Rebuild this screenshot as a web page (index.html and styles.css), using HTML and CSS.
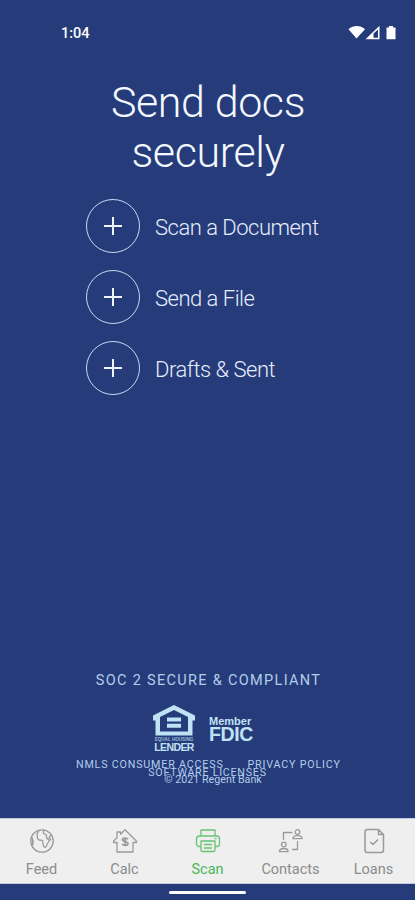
FILE: index.html
```html
<!DOCTYPE html>
<html lang="en">
<head>
<meta charset="utf-8">
<meta name="viewport" content="width=device-width, initial-scale=1">
<title>Send docs securely</title>
<link rel="stylesheet" href="styles.css">
</head>
<body>
<div class="screen">
  <header class="status">
    <span class="time">1:04</span>
    <svg class="status-icons" width="50" height="18" viewBox="0 0 50 18" fill="#fff">
      <path d="M.5 5.200C5.500 .8 12 .8 17 5.200L8.500 14.500Z"/>
      <path fill-rule="evenodd" d="M17.500 15.200L31.500 1.800V15.200ZM25.500 9.500V13.800H30V5.400Z"/>
      <path d="M41 2h4v1.500h2.500V15.200h-9V3.500H41Z"/>
    </svg>
  </header>
  <main class="content">
    <h1>Send docs<br>securely</h1>
    <ul class="actions">
      <li><span class="plus"><svg width="18" height="18" viewBox="0 0 18 18"><path d="M9 0v18M0 9h18"/></svg></span><span class="label">Scan a Document</span></li>
      <li><span class="plus"><svg width="18" height="18" viewBox="0 0 18 18"><path d="M9 0v18M0 9h18"/></svg></span><span class="label">Send a File</span></li>
      <li><span class="plus"><svg width="18" height="18" viewBox="0 0 18 18"><path d="M9 0v18M0 9h18"/></svg></span><span class="label">Drafts &amp; Sent</span></li>
    </ul>
  </main>
  <footer class="legal">
    <p class="soc">SOC 2 SECURE &amp; COMPLIANT</p>
    <div class="badges">
      <div class="lender">
        <svg width="42" height="31" viewBox="0 0 42 31"><path fill="#c0e2f5" fill-rule="evenodd" d="M21 0L42 10.500V15.500H39.500V30.500H2.500V15.500H0V10.500ZM21 5L7 12V26.500H35V12ZM14 12.500h14v4H14ZM14 18.700h14v4H14Z"/></svg>
        <span class="equal">EQUAL HOUSING</span>
        <span class="lender-name">LENDER</span>
      </div>
      <div class="fdic"><span class="member">Member</span><span class="fdic-name">FDIC</span></div>
    </div>
    <div class="links"><span>NMLS CONSUMER ACCESS</span><span>PRIVACY POLICY</span></div>
    <p class="licenses">SOFTWARE LICENSES</p>
    <p class="copyright">© 2021 Regent Bank</p>
  </footer>
  <nav class="tabs">
    <a class="tab">
      <svg viewBox="0 0 26 26"><circle cx="13" cy="13" r="11.200"/><path d="M10 2.500L8 6L8.500 10.500L10 12L13.500 12.300L14.500 18.500L16.500 19.500L18.500 15.500L20.500 12.500L18 10.500L17 6.500L14.500 5.500V2M22 7.500L20 9.500L22 12"/><path class="heavy" d="M2.500 9L4 13L3.500 17.500"/></svg>
      <span>Feed</span>
    </a>
    <a class="tab">
      <svg viewBox="0 0 26 26"><path d="M1.500 13.200L5 9.700V4H8.500V6.300L13 1.800L24.500 13.200V14.500H21V24H5V14.500H1.500Z"/><path class="heavy" d="M16 11.300C14.500 9.500 10.500 9.800 10.500 11.700C10.500 14 16 13 16 15.500C16 17.800 11.500 17.800 10 16M13.200 9.500V18.300"/></svg>
      <span>Calc</span>
    </a>
    <a class="tab active">
      <svg viewBox="0 0 26 26"><path d="M6 8V2H20V8M6 18.500H4Q1.500 18.500 1.500 16V11Q1.500 8 4.500 8H21.500Q24.500 8 24.500 11V16Q24.500 18.500 22 18.500H20M6 13H20V22Q20 23.500 18.500 23.500H7.500Q6 23.500 6 22ZM9 16.500H17M9 20H17M19.500 10.700H21.500"/></svg>
      <span>Scan</span>
    </a>
    <a class="tab">
      <svg viewBox="0 0 26 26"><path d="M5.500 12V4.500H14.500M19.500 13V21.500H14"/><circle cx="5.800" cy="16.500" r="2.300"/><path d="M1.500 23.700V22.500Q2.500 20.500 5.800 20.500T10 22.500V23.700Z"/><circle cx="19.500" cy="4" r="2.300"/><path d="M15 10.700V9.500Q16 7.700 19.500 7.700T24 9.500V10.700Z"/></svg>
      <span>Contacts</span>
    </a>
    <a class="tab">
      <svg class="doc" viewBox="0 0 26 26"><path d="M6.500 1.500H17.500L22.500 6.500V22Q22.500 24.500 20 24.500H6.500Q4 24.500 4 22V4Q4 1.500 6.500 1.500ZM17.500 1.500V6.500H22.500M9.200 14L12 16.500L17 11.500"/></svg>
      <span>Loans</span>
    </a>
  </nav>
  <div class="gesture"><span></span></div>
</div>
</body>
</html>
```
FILE: styles.css
```css
* { box-sizing: border-box; }
body, h1, p, ul { margin: 0; padding: 0; }
body { background: #253b7a; font-family: Roboto, sans-serif; }
.screen { width: 415px; height: 900px; display: flex; flex-direction: column; overflow: hidden; }
.status { height: 66px; display: flex; justify-content: space-between; align-items: center; padding: 0 17px 0 61px; color: #fff; }
.time { font-size: 14.5px; font-weight: 500; }
.status-icons { display: block; }
.content { flex: 1; padding-top: 11px; }
h1 { color: #f4f8ff; font-weight: 300; font-size: 43px; line-height: 50px; letter-spacing: -.4px; text-align: center; padding-left: 1px; }
.actions { list-style: none; margin-top: 22px; padding-left: 86px; display: flex; flex-direction: column; gap: 17px; }
.actions li { display: flex; align-items: center; gap: 15px; height: 54px; }
.plus { width: 54px; height: 54px; border: 1.2px solid #c9d9f3; border-radius: 50%; display: flex; align-items: center; justify-content: center; }
.plus path { stroke: #eef5ff; stroke-width: 2; fill: none; }
.label { color: #e6edfc; font-weight: 300; font-size: 22px; line-height: 26px; letter-spacing: -.5px; padding-top: 4px; white-space: nowrap; }
.legal { height: 147px; display: flex; flex-direction: column; color: #b4cdea; white-space: nowrap; }
.soc { text-align: center; font-size: 14.5px; letter-spacing: 1.32px; line-height: 20px; padding-left: 2px; }
.badges { display: flex; gap: 14px; margin: 14px 0 0 153px; height: 47px; color: #c0e2f5; font-family: "Liberation Sans", sans-serif; font-weight: 700; }
.lender { width: 42px; display: flex; flex-direction: column; align-items: center; }
.lender svg { display: block; }
.equal { font-size: 4.6px; line-height: 5px; margin-top: 1px; opacity: .75; }
.lender-name { font-size: 10.5px; line-height: 10px; letter-spacing: -.6px; }
.fdic { padding-top: 11px; display: flex; flex-direction: column; }
.member { font-size: 11px; line-height: 11px; }
.fdic-name { font-size: 19.5px; line-height: 15px; letter-spacing: -.4px; }
.links { display: flex; gap: 24px; margin-left: 76px; margin-top: 7px; font-size: 10.700px; line-height: 12px; letter-spacing: .82px; }
.licenses { text-align: center; font-size: 10.700px; letter-spacing: .75px; line-height: 12px; margin-top: -4px; }
.copyright { text-align: center; font-size: 10.700px; line-height: 12px; margin-top: -5px; padding-left: 11px; }
.tabs { height: 66px; background: #efefef; border-top: 1px solid #c5cbda; border-bottom: 1px solid #c5cbda; display: grid; grid-template-columns: repeat(5, 1fr); }
.tab { display: flex; flex-direction: column; align-items: center; padding-top: 9px; color: #8c8c8c; font-size: 14.5px; line-height: 18px; }
.tab svg { width: 26px; height: 26px; fill: none; stroke: #9a9a9a; stroke-width: 1.3; stroke-linejoin: round; }
.tab .heavy { stroke-width: 1.7; }
.tab .doc { stroke-width: 1.5; }
.tab span { margin-top: 7px; }
.active { color: #49b856; }
.tab.active svg { stroke: #66c371; }
.gesture { height: 16px; display: flex; justify-content: center; align-items: center; }
.gesture span { width: 77px; height: 3px; border-radius: 2px; background: #fff; }
```
